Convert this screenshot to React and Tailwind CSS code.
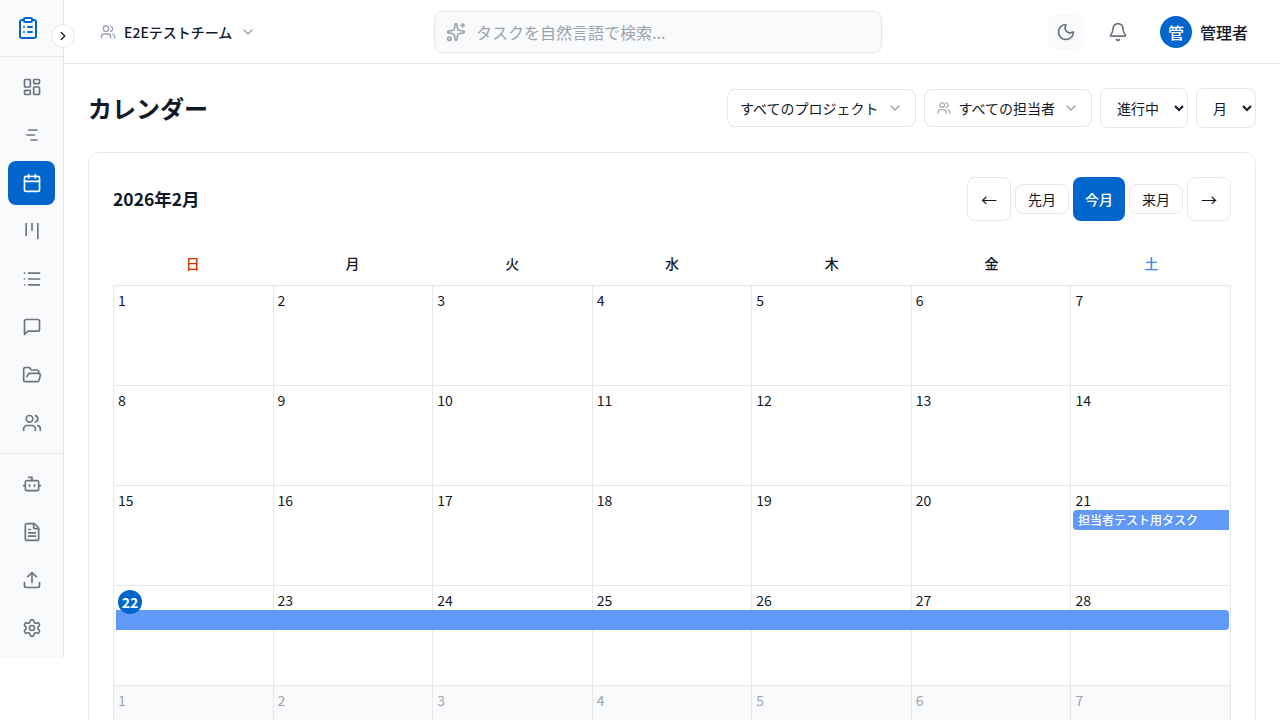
import {
  Bell,
  Bot,
  Calendar,
  ChevronDown,
  ChevronRight,
  ClipboardList,
  FileText,
  FolderOpen,
  Kanban,
  LayoutDashboard,
  List,
  Moon,
  Settings,
  Sparkles,
  Upload,
  Users,
} from 'lucide-react';

const FONT = 'font-["Noto_Sans_CJK_JP","Noto_Sans",sans-serif]';

function GanttIcon({ size }) {
  return (
    <svg width={size} height={size} viewBox="0 0 24 24" fill="none" stroke="currentColor" strokeWidth="2" strokeLinecap="round" strokeLinejoin="round">
      <path d="M8 6h10" />
      <path d="M6 12h9" />
      <path d="M11 18h7" />
    </svg>
  );
}

function MessageIcon({ size }) {
  return (
    <svg width={size} height={size} viewBox="0 0 24 24" fill="none" stroke="currentColor" strokeWidth="2" strokeLinecap="round" strokeLinejoin="round">
      <path d="M21 15a2 2 0 0 1-2 2H7l-4 4V5a2 2 0 0 1 2-2h14a2 2 0 0 1 2 2z" />
    </svg>
  );
}

const NAV_TOP = [
  { icon: LayoutDashboard },
  { icon: GanttIcon },
  { icon: Calendar, active: true },
  { icon: Kanban },
  { icon: List },
  { icon: MessageIcon },
  { icon: FolderOpen },
  { icon: Users },
];

const NAV_BOTTOM = [{ icon: Bot }, { icon: FileText }, { icon: Upload }, { icon: Settings }];

const DAY_NAMES = [
  { label: '日', color: 'text-[#cc3300]' },
  { label: '月', color: 'text-[#111827]' },
  { label: '火', color: 'text-[#111827]' },
  { label: '水', color: 'text-[#111827]' },
  { label: '木', color: 'text-[#111827]' },
  { label: '金', color: 'text-[#111827]' },
  { label: '土', color: 'text-[#3b82f6]' },
];

const WEEKS = [
  [1, 2, 3, 4, 5, 6, 7],
  [8, 9, 10, 11, 12, 13, 14],
  [15, 16, 17, 18, 19, 20, 21],
  [22, 23, 24, 25, 26, 27, 28],
  [1, 2, 3, 4, 5, 6, 7],
];

function NavItem({ icon: Icon, active }) {
  return (
    <div
      className={`flex h-11 w-[47px] items-center justify-center rounded-lg ${
        active ? 'bg-[#0066cc] text-white' : 'text-[#6b7280]'
      }`}
    >
      <Icon size={20} />
    </div>
  );
}

function Sidebar() {
  return (
    <aside className="relative flex h-[658px] w-16 shrink-0 flex-col border-r border-[#e5e7eb] bg-[#f9fafb]">
      <div className="flex h-[57px] shrink-0 items-start border-b border-[#e5e7eb] pt-4 pl-4 text-[#0066cc]">
        <ClipboardList size={24} />
      </div>
      <button className="absolute left-[51px] top-[24px] z-10 flex h-6 w-6 items-center justify-center rounded-full border border-[#e5e7eb] bg-white text-[#111827]">
        <ChevronRight size={14} strokeWidth={2.25} />
      </button>
      <nav className="flex flex-col gap-1 px-2 pt-2 pb-2">
        {NAV_TOP.map((item, i) => (
          <NavItem key={i} {...item} />
        ))}
      </nav>
      <div className="flex flex-col gap-1 border-t border-[#e5e7eb] px-2 pt-2">
        {NAV_BOTTOM.map((item, i) => (
          <NavItem key={i} {...item} />
        ))}
      </div>
    </aside>
  );
}

function Header() {
  return (
    <header className="flex h-16 shrink-0 items-center border-b border-[#e5e7eb] bg-white pr-4 pl-9">
      <div className="flex w-[334px] shrink-0 items-center">
        <Users size={16} className="text-[#9ca3af]" />
        <span className="ml-2 text-sm font-medium text-[#111827]">E2Eテストチーム</span>
        <ChevronDown size={16} className="ml-2 text-[#9ca3af]" />
      </div>
      <div className="flex h-[42px] w-[448px] shrink-0 items-center rounded-lg border border-[#e5e7eb] bg-[#f9fafb] pl-[11px]">
        <Sparkles size={20} className="text-[#9ca3af]" />
        <span className="ml-[10px] text-base text-[#9ca3af]">タスクを自然言語で検索...</span>
      </div>
      <div className="ml-auto flex items-center">
        <button className="flex h-9 w-9 items-center justify-center rounded-lg bg-[#f9fafb] text-[#6b7280]">
          <Moon size={20} />
        </button>
        <button className="ml-4 flex h-9 w-9 items-center justify-center text-[#6b7280]">
          <Bell size={20} />
        </button>
        <div className="ml-6 flex items-center gap-2">
          <div className="flex h-8 w-8 items-center justify-center rounded-full bg-[#0066cc] text-base font-medium text-white">
            管
          </div>
          <span className="pr-4 text-base font-medium text-[#111827]">管理者</span>
        </div>
      </div>
    </header>
  );
}

function FilterButton({ children, withIcon }) {
  return (
    <button className="flex h-[38px] items-center rounded-lg border border-[#e5e7eb] bg-white px-3 text-sm text-[#111827]">
      {withIcon && <Users size={14} className="mr-2 text-[#9ca3af]" />}
      <span>{children}</span>
      <ChevronDown size={16} className="ml-2 text-[#9ca3af]" />
    </button>
  );
}

function Toolbar() {
  return (
    <div className="mb-6 flex h-10 items-center justify-between">
      <h1 className="text-2xl font-bold text-[#111827]">カレンダー</h1>
      <div className="flex items-center gap-2">
        <FilterButton>すべてのプロジェクト</FilterButton>
        <FilterButton withIcon>すべての担当者</FilterButton>
        <select
          defaultValue="active"
          className="h-10 w-[88px] rounded-lg border border-[#e5e7eb] bg-white px-3 text-sm text-[#111827]"
        >
          <option value="active">進行中</option>
        </select>
        <select
          defaultValue="month"
          className="h-10 w-[60px] rounded-lg border border-[#e5e7eb] bg-white px-3 text-sm text-[#111827]"
        >
          <option value="month">月</option>
        </select>
      </div>
    </div>
  );
}

function MonthNav() {
  return (
    <div className="mb-6 flex h-11 items-center justify-between">
      <h2 className="text-[17.5px] font-bold text-[#111827]">2026年2月</h2>
      <div className="flex items-center gap-1">
        <button className="flex h-11 w-11 items-center justify-center rounded-lg border border-[#e5e7eb] bg-white text-base text-[#111827]">
          ←
        </button>
        <button className="h-[30px] w-[54px] rounded-lg border border-[#e5e7eb] bg-white text-sm text-[#111827]">
          先月
        </button>
        <button className="h-11 w-[52px] rounded-lg bg-[#0066cc] text-sm font-medium text-white">今月</button>
        <button className="h-[30px] w-[54px] rounded-lg border border-[#e5e7eb] bg-white text-sm text-[#111827]">
          来月
        </button>
        <button className="flex h-11 w-11 items-center justify-center rounded-lg border border-[#e5e7eb] bg-white text-base text-[#111827]">
          →
        </button>
      </div>
    </div>
  );
}

function DayCell({ day, muted, today }) {
  return (
    <div className={`h-[100px] border-r border-b border-[#e5e7eb] p-1 text-sm ${muted ? 'bg-[#f9fafb]' : 'bg-white'}`}>
      {today ? (
        <span className="relative z-10 flex h-6 w-6 items-center justify-center rounded-full bg-[#0066cc] font-bold text-white">
          {day}
        </span>
      ) : (
        <span className={muted ? 'text-[#9ca3af]' : 'text-[#111827]'}>{day}</span>
      )}
    </div>
  );
}

function CalendarGrid() {
  return (
    <div className="border-t border-l border-[#e5e7eb]">
      {WEEKS.map((week, w) => (
        <div key={w} className="relative grid grid-cols-7">
          {week.map((day, d) => (
            <DayCell key={d} day={day} muted={w === 4} today={w === 3 && d === 0} />
          ))}
          {w === 2 && (
            <div className="absolute top-[24px] left-[959px] flex h-5 w-[156px] items-center rounded-l bg-[#6099f8] pl-[5px] text-xs font-medium text-white">
              担当者テスト用タスク
            </div>
          )}
          {w === 3 && <div className="absolute top-[24px] left-[2px] h-5 w-[1113px] rounded-r bg-[#6099f8]" />}
        </div>
      ))}
    </div>
  );
}

export default function App() {
  return (
    <div className={`flex h-[720px] w-[1280px] overflow-hidden bg-white ${FONT}`}>
      <Sidebar />
      <div className="flex min-w-0 flex-1 flex-col">
        <Header />
        <main className="flex-1 overflow-hidden p-6">
          <Toolbar />
          <section className="rounded-xl border border-[#e5e7eb] bg-white p-6">
            <MonthNav />
            <div className="mb-1 grid h-9 grid-cols-7">
              {DAY_NAMES.map((d) => (
                <div key={d.label} className={`flex items-center justify-center text-sm font-medium ${d.color}`}>
                  {d.label}
                </div>
              ))}
            </div>
            <CalendarGrid />
          </section>
        </main>
      </div>
    </div>
  );
}
